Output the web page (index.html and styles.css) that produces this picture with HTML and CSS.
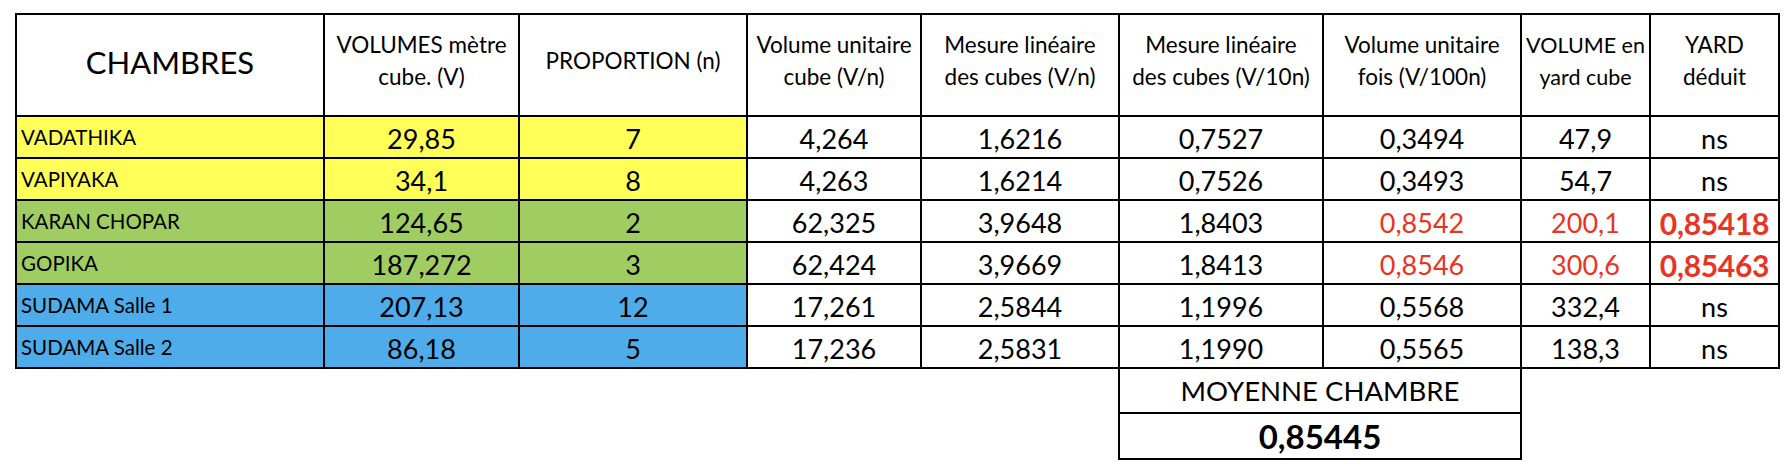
FILE: index.html
```html
<!DOCTYPE html>
<html lang="fr">
<head>
<meta charset="utf-8">
<title>Chambres</title>
<link rel="stylesheet" href="styles.css">
</head>
<body>
<table class="sheet">
  <colgroup>
    <col class="c-name"><col class="c-vol"><col class="c-prop"><col class="c-vu">
    <col class="c-ml"><col class="c-ml10"><col class="c-vu100"><col class="c-yard"><col class="c-ded">
  </colgroup>
  <thead>
    <tr class="head">
      <th class="title">CHAMBRES</th>
      <th>VOLUMES mètre<br>cube. (V)</th>
      <th>PROPORTION (n)</th>
      <th>Volume unitaire<br>cube (V/n)</th>
      <th>Mesure linéaire<br>des cubes (V/n)</th>
      <th>Mesure linéaire<br>des cubes (V/10n)</th>
      <th>Volume unitaire<br>fois (V/100n)</th>
      <th class="narrow">VOLUME en<br>yard cube</th>
      <th>YARD<br>déduit</th>
    </tr>
  </thead>
  <tbody>
    <tr class="row yellow">
      <td class="name">VADATHIKA</td><td class="fill">29,85</td><td class="fill">7</td>
      <td>4,264</td><td>1,6216</td><td>0,7527</td><td>0,3494</td><td>47,9</td><td>ns</td>
    </tr>
    <tr class="row yellow">
      <td class="name">VAPIYAKA</td><td class="fill">34,1</td><td class="fill">8</td>
      <td>4,263</td><td>1,6214</td><td>0,7526</td><td>0,3493</td><td>54,7</td><td>ns</td>
    </tr>
    <tr class="row green">
      <td class="name">KARAN CHOPAR</td><td class="fill">124,65</td><td class="fill">2</td>
      <td>62,325</td><td>3,9648</td><td>1,8403</td><td class="red">0,8542</td><td class="red">200,1</td><td class="red bold">0,85418</td>
    </tr>
    <tr class="row green">
      <td class="name">GOPIKA</td><td class="fill">187,272</td><td class="fill">3</td>
      <td>62,424</td><td>3,9669</td><td>1,8413</td><td class="red">0,8546</td><td class="red">300,6</td><td class="red bold">0,85463</td>
    </tr>
    <tr class="row blue">
      <td class="name">SUDAMA Salle 1</td><td class="fill">207,13</td><td class="fill">12</td>
      <td>17,261</td><td>2,5844</td><td>1,1996</td><td>0,5568</td><td>332,4</td><td>ns</td>
    </tr>
    <tr class="row blue">
      <td class="name">SUDAMA Salle 2</td><td class="fill">86,18</td><td class="fill">5</td>
      <td>17,236</td><td>2,5831</td><td>1,1990</td><td>0,5565</td><td>138,3</td><td>ns</td>
    </tr>
    <tr class="avg-label">
      <td class="blank" colspan="5"></td>
      <td class="box" colspan="2">MOYENNE CHAMBRE</td>
      <td class="blank" colspan="2"></td>
    </tr>
    <tr class="avg-value">
      <td class="blank" colspan="5"></td>
      <td class="box" colspan="2">0,85445</td>
      <td class="blank" colspan="2"></td>
    </tr>
  </tbody>
</table>
</body>
</html>
```

FILE: styles.css
```css
html, body {
  margin: 0;
  padding: 0;
  background: #ffffff;
}

body {
  padding: 13px 0 0 15px;
  font-family: Lato, "Open Sans", "Liberation Sans", sans-serif;
  color: #000000;
}

.sheet {
  border-collapse: collapse;
  table-layout: fixed;
  width: 1763px;
}

.c-name { width: 308px; }
.c-vol { width: 195px; }
.c-prop { width: 228px; }
.c-vu { width: 174px; }
.c-ml { width: 198px; }
.c-ml10 { width: 204px; }
.c-vu100 { width: 198px; }
.c-yard { width: 129px; }
.c-ded { width: 129px; }

.sheet th,
.sheet td {
  border: 2px solid #000000;
  padding: 0;
  text-align: center;
  vertical-align: middle;
  white-space: nowrap;
  overflow: hidden;
}

.head th {
  height: 92px;
  font-weight: 400;
  font-size: 22.5px;
  line-height: 32px;
  padding-bottom: 8px;
}

.head th.narrow {
  font-size: 21.5px;
}

.head th.title {
  font-size: 31px;
  padding-bottom: 6px;
  height: 94px;
}

.row td {
  height: 36px;
  font-size: 27px;
  line-height: 30px;
  padding-top: 4px;
}

.row td.name {
  text-align: left;
  font-size: 20.5px;
  padding-left: 4px;
  padding-top: 0;
  height: 40px;
}

.yellow .name, .yellow .fill { background: #ffff57; }
.green .name, .green .fill { background: #a0cd62; }
.blue .name, .blue .fill { background: #4eacea; }

.red { color: #ea3323; }
.row td.bold {
  font-weight: 700;
  font-size: 30px;
  letter-spacing: -0.3px;
}

.sheet td.blank {
  border: none;
}

.avg-label td.box {
  height: 43px;
  font-size: 27.5px;
  line-height: 30px;
}

.avg-value td.box {
  height: 44px;
  font-size: 33px;
  font-weight: 700;
  line-height: 36px;
}
```
